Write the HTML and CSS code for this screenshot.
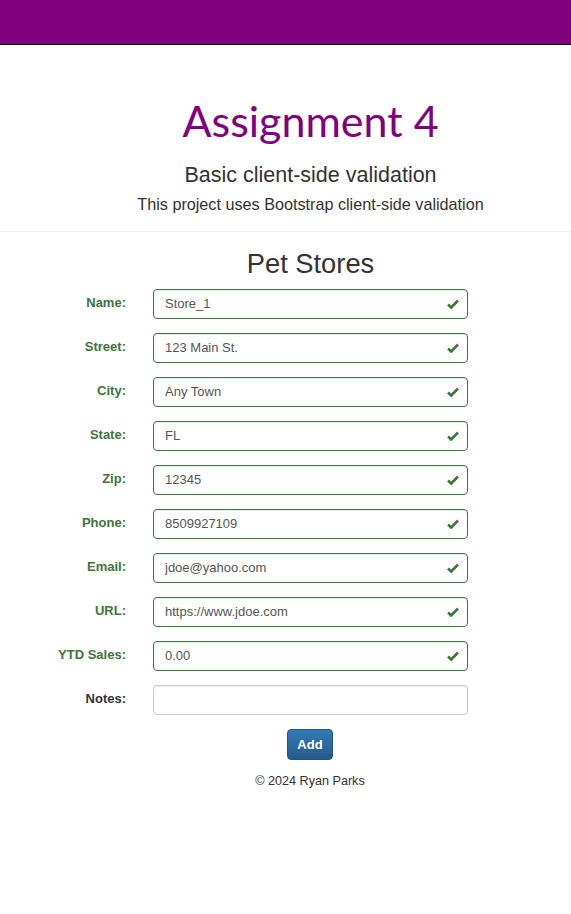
FILE: index.html
```html
<!DOCTYPE html>
<html>
<head>
<meta charset="utf-8">
<link rel="stylesheet" href="styles.css">
</head>
<body>
<header class="topbar"></header>
<div class="hero">
  <h1 class="title">Assignment 4</h1>
  <p class="subtitle">Basic client-side validation</p>
  <p class="lead">This project uses Bootstrap client-side validation</p>
</div>
<hr class="divider">
<main class="content">
  <h2 class="heading">Pet Stores</h2>
  <form class="form">
    <div class="row ok"><label>Name:</label><div class="field"><input value="Store_1"><svg class="check" viewBox="0 0 12 10"><path d="M1 5.5 L4.2 8.5 L11 1.5" /></svg></div></div>
    <div class="row ok"><label>Street:</label><div class="field"><input value="123 Main St."><svg class="check" viewBox="0 0 12 10"><path d="M1 5.5 L4.2 8.5 L11 1.5" /></svg></div></div>
    <div class="row ok"><label>City:</label><div class="field"><input value="Any Town"><svg class="check" viewBox="0 0 12 10"><path d="M1 5.5 L4.2 8.5 L11 1.5" /></svg></div></div>
    <div class="row ok"><label>State:</label><div class="field"><input value="FL"><svg class="check" viewBox="0 0 12 10"><path d="M1 5.5 L4.2 8.5 L11 1.5" /></svg></div></div>
    <div class="row ok"><label>Zip:</label><div class="field"><input value="12345"><svg class="check" viewBox="0 0 12 10"><path d="M1 5.5 L4.2 8.5 L11 1.5" /></svg></div></div>
    <div class="row ok"><label>Phone:</label><div class="field"><input value="8509927109"><svg class="check" viewBox="0 0 12 10"><path d="M1 5.5 L4.2 8.5 L11 1.5" /></svg></div></div>
    <div class="row ok"><label>Email:</label><div class="field"><input value="jdoe@yahoo.com"><svg class="check" viewBox="0 0 12 10"><path d="M1 5.5 L4.2 8.5 L11 1.5" /></svg></div></div>
    <div class="row ok"><label>URL:</label><div class="field"><input value="https://www.jdoe.com"><svg class="check" viewBox="0 0 12 10"><path d="M1 5.5 L4.2 8.5 L11 1.5" /></svg></div></div>
    <div class="row ok"><label>YTD Sales:</label><div class="field"><input value="0.00"><svg class="check" viewBox="0 0 12 10"><path d="M1 5.5 L4.2 8.5 L11 1.5" /></svg></div></div>
    <div class="row"><label>Notes:</label><div class="field"><input value=""></div></div>
    <div class="actions"><button type="button" class="btn">Add</button></div>
  </form>
  <footer class="footer">© 2024 Ryan Parks</footer>
</main>
</body>
</html>
```
FILE: styles.css
```css
* { box-sizing: border-box; }
body {
  margin: 0;
  font-family: "Liberation Sans", Arial, sans-serif;
  font-size: 14px;
  color: #333;
  background: #fff;
}
.topbar {
  height: 45px;
  background: #800080;
  border-bottom: 1px solid #000;
}
.hero {
  text-align: center;
  padding-left: 50px;
  padding-top: 50px;
}
.title {
  font-family: Lato, "Open Sans", sans-serif;
  font-weight: 400;
  font-size: 43px;
  color: #800080;
  margin: 0;
  line-height: 52px;
}
.subtitle {
  font-size: 21.5px;
  margin: 15px 0 0;
  line-height: 26px;
}
.lead {
  font-size: 16.2px;
  margin: 5px 0 0;
  line-height: 22px;
}
.divider {
  border: 0;
  border-top: 1px solid #eee;
  margin: 16px 0 0;
}
.content {
  padding-left: 50px;
}
.heading {
  text-align: center;
  font-weight: 400;
  font-size: 27.3px;
  margin: 14px 0 0;
  line-height: 36px;
}
.form {
  margin-top: 7px;
}
.row {
  display: flex;
  align-items: center;
  height: 30px;
  margin-bottom: 14px;
}
.row label {
  width: 76px;
  text-align: right;
  font-weight: 700;
  font-size: 13px;
  color: #333;
  margin-right: 27px;
  padding-bottom: 3px;
}
.row.ok label { color: #3c763d; }
.field {
  position: relative;
  width: 315px;
  height: 30px;
}
.field input {
  width: 100%;
  height: 30px;
  border: 1px solid #ccc;
  border-radius: 4px;
  padding: 0 30px 2px 11px;
  font-family: "Liberation Sans", Arial, sans-serif;
  font-size: 13px;
  color: #555;
  box-shadow: inset 0 1px 1px rgba(0,0,0,.075);
  outline: none;
}
.row.ok .field input { border-color: #3c763d; }
.check {
  position: absolute;
  right: 9px;
  top: 10px;
  width: 12px;
  height: 10px;
}
.check path {
  fill: none;
  stroke: #3c763d;
  stroke-width: 2.6;
}
.actions {
  display: flex;
  justify-content: center;
  width: 520px;
  margin-top: 2px;
}
.btn {
  width: 46px;
  height: 31px;
  border: 1px solid #245580;
  border-radius: 4px;
  background: linear-gradient(#337ab7, #265a88);
  color: #fff;
  font-family: "Liberation Sans", Arial, sans-serif;
  font-weight: 700;
  font-size: 13px;
  padding: 0;
}
.footer {
  width: 520px;
  text-align: center;
  margin-top: 14px;
  font-size: 12.6px;
}
```
